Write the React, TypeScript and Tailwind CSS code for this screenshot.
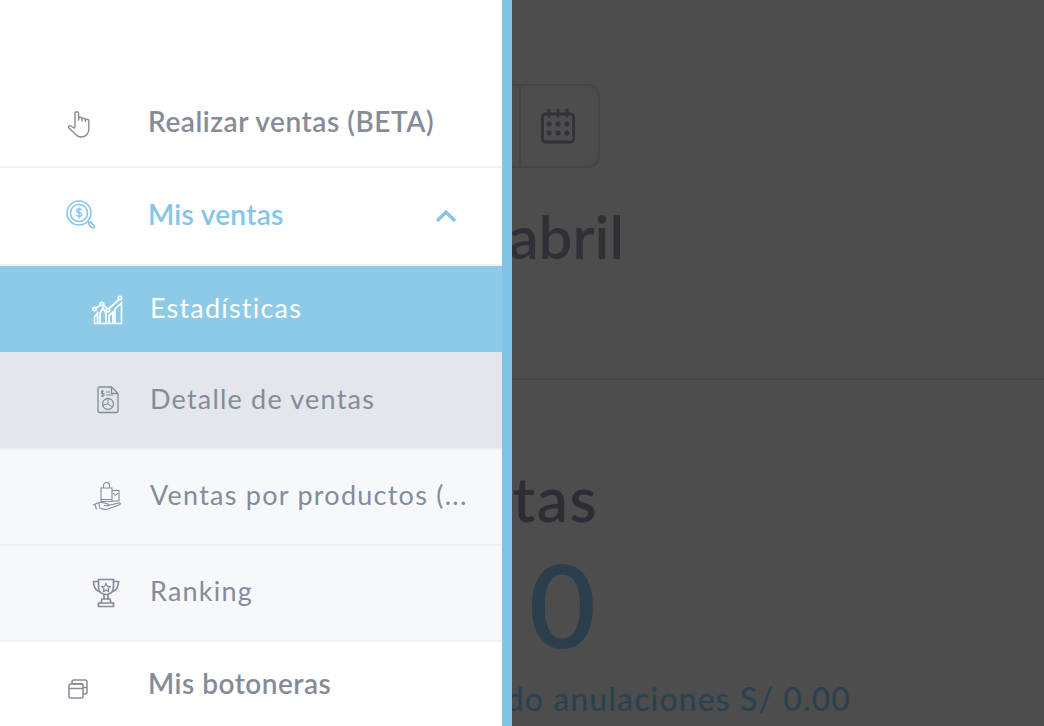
const font = { fontFamily: "Lato, sans-serif" };

function HandIcon() {
  return (
    <svg width="24" height="30" viewBox="0 0 24 30" fill="none" stroke="currentColor" strokeWidth="1.400" strokeLinecap="round">
      <path d="M9 17V3.500a1.800 1.800 0 0 1 3.600 0V10M12.600 9a1.700 1.700 0 0 1 3.400 0v2M16 10a1.700 1.700 0 0 1 3.400 0v1.500M19.400 11a1.700 1.700 0 0 1 3.400 0v8c0 4.500-3 8-7.500 8-3 0-5-1.500-7-4l-5.500-5c-1.200-1.300.5-3 2-2l3.500 2.200" />
    </svg>
  );
}

function DollarSearch() {
  return (
    <svg width="30" height="30" viewBox="0 0 30 30" fill="none" stroke="currentColor" strokeWidth="1.600">
      <circle cx="13" cy="13" r="12" />
      <circle cx="13" cy="13" r="8.500" />
      <path d="M16 10c-1-1.400-5-1.500-5.400.6-.3 2.400 5.400 1.400 5.300 4-.2 2.200-4.300 2-5.700.5M13 7.500v11" strokeWidth="1.300" />
      <path d="M21.500 21.500l1.500 1.500M22.500 24l2-2 3.500 3.500a1.400 1.400 0 0 1-2 2z" />
    </svg>
  );
}

function ChartIcon() {
  return (
    <svg width="32" height="32" viewBox="0 0 32 32" fill="none" stroke="currentColor" strokeWidth="1.700">
      <circle cx="2.500" cy="16" r="1.700" />
      <circle cx="10" cy="11" r="1.700" />
      <circle cx="16" cy="17" r="1.700" />
      <circle cx="28" cy="5" r="1.700" />
      <path d="M4 15l4.500-3M11.500 12l3.500 3.500M17 15.500L27 6.500" />
      <path d="M2 30.500h28M29.500 30.500V10L23 16v14.500M21 30.500V19l-4 3.500v8M14 30.500V20l-3-5-3 5v10.500M5.500 30.500V20L2.500 24v6.500" />
    </svg>
  );
}

function ReportIcon() {
  return (
    <svg width="22" height="28" viewBox="0 0 22 28" fill="none" stroke="currentColor" strokeWidth="1.300">
      <path d="M2.500 1h12L21 7.500V25a1.500 1.500 0 0 1-1.500 1.500h-17A1.500 1.500 0 0 1 1 25V2.500A1.500 1.500 0 0 1 2.500 1z" />
      <path d="M14.500 1v6.500H21" />
      <path d="M7 5H4.500v2.500H7V10H4M5.500 4v7M9 6h4M9 9h7" strokeWidth="1" />
      <circle cx="11" cy="18" r="5.500" />
      <path d="M11 12.500V18l4.500 3M11 18l-5 1" strokeWidth="1" />
    </svg>
  );
}

function HandBagIcon() {
  return (
    <svg width="30" height="30" viewBox="0 0 30 30" fill="none" stroke="currentColor" strokeWidth="1.100">
      <path d="M9 6h11v13.500H9zM11.500 6V3.500a3 3 0 0 1 6 0V6M9 17.500h11" />
      <path d="M20 8.500h7v10.500h-7M21.500 11c.5 3 3.500 3 4 0" />
      <path d="M1 23l6-2.500c2-.8 3-.2 5 .5l4 1c1.500.5 1 2-.5 1.800L12 23.500M16 23.500l11-2.500c1.500-.2 2 1 .5 1.700L16 27c-3 .8-5 .3-7-.5M3 22.500l1.500 5M7 21l1 6" />
    </svg>
  );
}

function TrophyIcon() {
  return (
    <svg width="28" height="30" viewBox="0 0 28 30" fill="none" stroke="currentColor" strokeWidth="1.700">
      <path d="M6.500 1.500h15v7c0 5-3 8-7.500 8s-7.500-3-7.500-8z" />
      <path d="M6.500 3.500H1.500c0 5 1 8.500 6.500 10.500M21.500 3.500h5c0 5-1 8.500-6.500 10.500" />
      <path d="M12 16.500v4.500M16 16.500v4.500M10 21h8l1 4H9zM6.500 25h15v3.500h-15z" />
      <path d="M14 5.500l1.300 2.700 2.900.4-2.100 2 .5 2.900-2.600-1.400-2.600 1.400.5-2.900-2.100-2 2.900-.4z" strokeWidth="1.300" />
    </svg>
  );
}

function BoxesIcon() {
  return (
    <svg width="20" height="20" viewBox="0 0 20 20" fill="none" stroke="currentColor" strokeWidth="1.500">
      <rect x="1" y="5" width="14" height="14" rx="2" />
      <path d="M1 9.500h14M4 5V3a2 2 0 0 1 2-2h11a2 2 0 0 1 2 2v10a2 2 0 0 1-2 2h-2M4.500 4.800h10.700M15 8.500h4" />
    </svg>
  );
}

function CalendarIcon() {
  return (
    <svg width="36" height="36" viewBox="0 0 36 36" fill="none" stroke="#30333a" strokeWidth="3" strokeLinecap="round">
      <path d="M33.500 28V9a3 3 0 0 0-3-3h-25a3 3 0 0 0-3 3v22a3 3 0 0 0 3 3h25a3 3 0 0 0 3-3" />
      <path d="M9 2v6M18 2v6M27 2v6" />
      <g fill="#30333a" stroke="none">
        <circle cx="9" cy="16" r="2.500" />
        <circle cx="18" cy="16" r="2.500" />
        <circle cx="27" cy="16" r="2.500" />
        <circle cx="9" cy="25" r="2.500" />
        <circle cx="18" cy="25" r="2.500" />
        <circle cx="27" cy="25" r="2.500" />
      </g>
    </svg>
  );
}

export default function App() {
  return (
    <div className="flex h-[726px] w-[1044px] overflow-hidden bg-[#4d4d4d]" style={font}>
      {/* Menu */}
      <aside className="flex w-[502px] shrink-0 flex-col bg-white">
        <div className="flex h-[168px] items-center border-b-2 border-[#eef0f4] pt-[76px] pl-[66px] text-[28px] text-[#858c98]">
          <span className="flex w-[82px] pt-[8px]">
            <HandIcon />
          </span>
          <span className="font-semibold tracking-[0.55px]">Realizar ventas (BETA)</span>
        </div>

        <div className="flex h-[98px] items-center border-b-2 border-[#eef0f4] pl-[66px] text-[28px] text-[#83c6e8]">
          <span className="flex w-[82px] pb-[2px]">
            <DollarSearch />
          </span>
          <span className="flex-1 pb-[4px] font-semibold tracking-[0.3px]">Mis ventas</span>
          <svg className="mr-[45px]" width="22" height="14" viewBox="0 0 22 14" fill="none" stroke="currentColor" strokeWidth="3.200">
            <path d="M2 12l9-9 9 9" />
          </svg>
        </div>

        <div className="flex h-[86px] items-center bg-[#8dcae8] pl-[92px] text-[27px] text-white">
          <span className="flex w-[58px]">
            <ChartIcon />
          </span>
          <span className="pb-[2px] tracking-[1.2px]">Estadísticas</span>
        </div>

        <div className="flex h-[96px] items-center bg-[#e3e6eb] pl-[97px] text-[27px] text-[#858c98]">
          <span className="flex w-[53px]">
            <ReportIcon />
          </span>
          <span className="pb-[2px] tracking-[1.2px]">Detalle de ventas</span>
        </div>

        <div className="flex h-[98px] items-center border-y-2 border-[#eef0f4] bg-[#f6f8fc] pl-[92px] text-[27px] text-[#858c98]">
          <span className="flex w-[58px]">
            <HandBagIcon />
          </span>
          <span className="pb-[4px] tracking-[1.25px]">Ventas por productos (...</span>
        </div>

        <div className="flex h-[96px] items-center border-b-2 border-[#eef0f4] bg-[#f6f8fc] pl-[92px] text-[27px] text-[#858c98]">
          <span className="flex w-[58px]">
            <TrophyIcon />
          </span>
          <span className="pb-[4px] tracking-[1.2px]">Ranking</span>
        </div>

        <div className="flex flex-1 items-center pl-[68px] text-[28px] text-[#858c98]">
          <span className="flex w-[80px] pt-[10px]">
            <BoxesIcon />
          </span>
          <span className="pb-[2px] font-semibold tracking-[0.5px]">Mis botoneras</span>
        </div>
      </aside>

      <div className="w-[10px] shrink-0 bg-[#7fc4e6]" />

      {/* Dimmed page behind the menu */}
      <main className="min-w-0 flex-1 overflow-hidden">
        <div className="-ml-[300px] w-[832px] pt-[84px]">
          <div className="flex h-[84px] w-[388px] justify-end rounded-r-[12px] border-2 border-[#42454a]">
            <div className="flex w-[79px] items-center justify-center border-l-2 border-[#42454a] pr-[3px]">
              <CalendarIcon />
            </div>
          </div>
          <h2 className="mt-[34px] w-[412px] text-right text-[60px] leading-[68px] font-semibold text-[#2f3137]">abril</h2>
          <div className="mt-[108px] border-t-2 border-[#474747]" />
          <h3 className="mt-[84px] w-[386px] text-right text-[62px] leading-[68px] font-semibold tracking-[1.5px] text-[#2d2e35]">Ventas</h3>
          <div className="mt-[17px] w-[384px] text-right text-[116px] leading-[110px] font-semibold text-[#2a3f4b]">0</div>
          <p className="mt-[22px] w-[639px] text-right text-[32px] leading-[36px] font-medium tracking-[1.1px] text-[#2a4150]">
            Incluyendo anulaciones S/ 0.00
          </p>
        </div>
      </main>
    </div>
  );
}
